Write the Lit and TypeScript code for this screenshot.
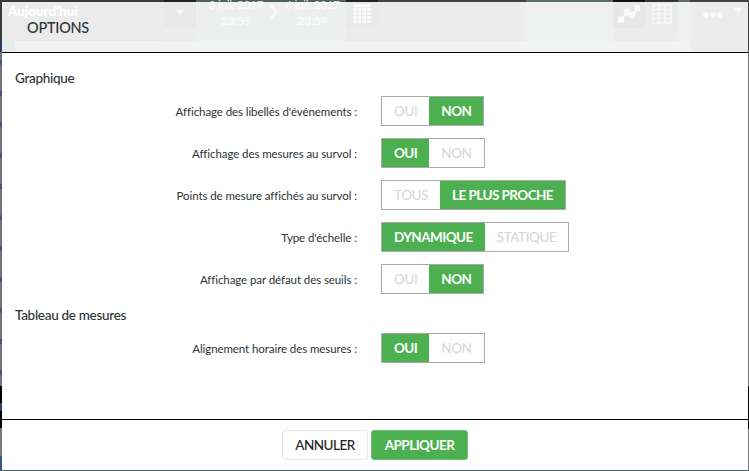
import { LitElement, html, css, svg } from "lit";
import { customElement } from "lit/decorators.js";

type Row = { label: string; options: { text: string; on: boolean }[] };
const opt = (a: string, b: string, first: boolean) => [
  { text: a, on: first },
  { text: b, on: !first },
];
const graph: Row[] = [
  { label: "Affichage des libellés d'événements :", options: opt("OUI", "NON", false) },
  { label: "Affichage des mesures au survol :", options: opt("OUI", "NON", true) },
  { label: "Points de mesure affichés au survol :", options: opt("TOUS", "LE PLUS PROCHE", false) },
  { label: "Type d'échelle :", options: opt("DYNAMIQUE", "STATIQUE", true) },
  { label: "Affichage par défaut des seuils :", options: opt("OUI", "NON", false) },
];
const table: Row[] = [
  { label: "Alignement horaire des mesures :", options: opt("OUI", "NON", true) },
];

@customElement("app-root")
export class AppRoot extends LitElement {
  static styles = css`
    :host {
      display: block;
      width: 749px;
      height: 471px;
      position: relative;
      overflow: hidden;
      font-family: Lato, "Open Sans", sans-serif;
      background:
        repeating-linear-gradient(to bottom, #6f7679 0 8px, #54507e 8px 13px, #6f7679 13px 31px) 0 52px / 2px 334px no-repeat,
        linear-gradient(to bottom, #000 0 17px, #2f3f78 17px 25px, #000 25px 42px, #7a7a7a 42px 70px, #3a5580 70px) 0 386px / 2px 85px no-repeat,
        linear-gradient(to bottom, #70767a 0 386px, #000 386px 429px, #7a7a7a 429px 470px, #4a6066 470px);
    }
    .toolbar {
      height: 41px;
      display: flex;
      align-items: flex-start;
      background: #444;
      color: #fff;
    }
    .toolbar svg { opacity: 0.75; }
    .today {
      width: 164px;
      box-sizing: border-box;
      padding: 2px 0 0 8px;
      font-size: 13.5px;
      font-weight: 700;
      line-height: 18px;
      background: #3a3a3a;
      height: 41px;
    }
    .cell {
      height: 28px;
      flex: none;
      display: flex;
      align-items: center;
      justify-content: center;
      background: #222;
    }
    .caret-cell { width: 32px; padding-bottom: 3px; box-sizing: border-box; }
    .dates {
      flex: none;
      width: 150px;
      height: 41px;
      background: #4f6062;
      display: flex;
      align-items: flex-start;
      color: rgba(255, 255, 255, 0.75);
    }
    .date {
      flex: none;
      width: 74px;
      margin-left: 3px;
      text-align: center;
      line-height: 15px;
      margin-top: -3px;
      font-size: 12px;
      letter-spacing: -0.4px;
    }
    .date.second { width: 67px; margin-left: 0; }
    .date span { display: block; margin-top: 1px; letter-spacing: -0.1px; }
    .chev { flex: none; margin: 5px 0 0 -3px; }
    .cal { width: 32px; }
    .spacer { flex: none; width: 148px; background: #444; height: 41px; }
    .teal { flex: none; width: 87px; background: #5a6b6b; height: 41px; }
    .chart { width: 32px; background: #111; }
    .gridc { width: 32px; margin-left: 1px; background: #333; }
    .tealshort { width: 12px; background: #5a6b6b; height: 41px; flex: none; }
    .more {
      flex: 1;
      height: 41px;
      background: #444;
      display: flex;
      align-items: flex-start;
      gap: 11px;
      padding: 12px 0 0 13px;
    }
    .more .caret { margin-top: -4px; }
    .sub {
      height: 11px;
      background: linear-gradient(to right, #2a4060 0 2px, #2a3a3a 2px 15px, #737d7d 15px);
    }
    .modal {
      position: absolute;
      left: 2px;
      top: 2px;
      width: 746px;
      height: 468px;
      display: flex;
      flex-direction: column;
    }
    .head {
      height: 51px;
      box-sizing: border-box;
      flex: none;
      background: rgba(255, 255, 255, 0.9);
      border-bottom: 1px solid #000;
      padding: 17px 0 0 25px;
      font-size: 14.5px;
      line-height: 18px;
      font-weight: 500;
      color: #2d3436;
      letter-spacing: -0.25px;
    }
    .body {
      flex: 1;
      background: #fff;
      padding: 16px 0 0 13px;
      color: #2d3436;
    }
    h2 {
      margin: 0;
      font-size: 13.5px;
      line-height: 18px;
      font-weight: 500;
      letter-spacing: -0.3px;
    }
    .rows {
      display: flex;
      flex-direction: column;
      gap: 12px;
      padding: 9px 0 0;
    }
    .rows + h2 { margin-top: 12px; }
    .row {
      display: flex;
      align-items: center;
      height: 30px;
    }
    .label {
      width: 342px;
      text-align: right;
      font-size: 11.5px;
      letter-spacing: -0.08px;
      margin-right: 24px;
    }
    .toggle {
      display: flex;
      height: 30px;
      box-sizing: border-box;
      border: 1px solid #aaa;
      font-size: 13.5px;
      line-height: 28px;
    }
    .seg {
      padding: 0 12px;
      color: #d2d6d8;
      background: #fff;
      letter-spacing: -0.4px;
    }
    .seg.on {
      background: #4caf50;
      color: #fff;
      font-weight: 700;
      letter-spacing: -0.55px;
    }
    .foot {
      flex: none;
      height: 51px;
      box-sizing: border-box;
      border-top: 1px solid #000;
      background: #fff;
      display: flex;
      justify-content: center;
      gap: 3px;
      padding: 10px 0 0 0;
    }
    button {
      height: 30px;
      width: 86px;
      box-sizing: border-box;
      border-radius: 3px;
      border: 1px solid #e6e6e6;
      background: #fff;
      color: #222;
      font: 500 13.5px/28px Lato, sans-serif;
      letter-spacing: -0.5px;
      padding: 0;
    }
    button.primary {
      width: 97px;
      background: #4caf50;
      border-color: #6fbf73;
      color: #fff;
      font-weight: 700;
      letter-spacing: -0.55px;
    }
  `;

  private rows(rows: Row[]) {
    return html`<div class="rows">
      ${rows.map(
        (r) => html`<div class="row">
          <div class="label">${r.label}</div>
          <div class="toggle">
            ${r.options.map((o) => html`<div class="seg ${o.on ? "on" : ""}">${o.text}</div>`)}
          </div>
        </div>`
      )}
    </div>`;
  }

  render() {
    return html`
      <div class="toolbar">
        <div class="today">Aujourd'hui</div>
        <div class="cell caret-cell">
          <svg width="8" height="5" viewBox="0 0 10 6"><path d="M0 0h10L5 6z" fill="#fff" /></svg>
        </div>
        <div class="dates">
          <div class="date">3 juil. 2017<span>23:59</span></div>
          <svg class="chev" width="9" height="14" viewBox="0 0 9 14" fill="none" stroke="#fff" stroke-width="2"><path d="M1 1l6 6-6 6" /></svg>
          <div class="date second">4 juil. 2017<span>23:59</span></div>
        </div>
        <div class="cell cal">
          <svg width="18" height="20" viewBox="0 0 18 20" fill="#fff">
            <rect x="0" y="0" width="18" height="3" />
            ${[5, 9, 13, 17].map((y) =>
              [0, 4.7, 9.4, 14.1].map((x) => svg`<rect x=${x} y=${y - 1} width="3.6" height="3" />`)
            )}
          </svg>
        </div>
        <div class="spacer"></div>
        <div class="teal"></div>
        <div class="cell chart">
          <svg width="22" height="18" viewBox="0 0 22 18" fill="none" stroke="#fff" stroke-width="2">
            <path d="M3 15l6-8 5 3 6-7" />
            <circle cx="3" cy="15" r="2.4" fill="#fff" /><circle cx="9" cy="7" r="2.4" fill="#fff" />
            <circle cx="14" cy="10" r="2.4" fill="#fff" /><circle cx="20" cy="3" r="2.4" fill="#fff" />
          </svg>
        </div>
        <div class="cell gridc">
          <svg width="20" height="20" viewBox="0 0 20 20" fill="none" stroke="#fff" stroke-width="1.2">
            <rect x="1" y="1" width="18" height="18" />
            <path d="M1 5.5h18M1 10h18M1 14.5h18M7 1v18M13 1v18" />
          </svg>
        </div>
        <div class="tealshort"></div>
        <div class="more">
          <svg width="20" height="6" viewBox="0 0 20 6" fill="#fff"><circle cx="3" cy="3" r="2.8" /><circle cx="10" cy="3" r="2.8" /><circle cx="17" cy="3" r="2.8" /></svg>
          <svg class="caret" width="8" height="5" viewBox="0 0 10 6"><path d="M0 0h10L5 6z" fill="#fff" /></svg>
        </div>
      </div>
      <div class="sub"></div>
      <div class="modal">
        <div class="head">OPTIONS</div>
        <div class="body">
          <h2>Graphique</h2>
          ${this.rows(graph)}
          <h2>Tableau de mesures</h2>
          ${this.rows(table)}
        </div>
        <div class="foot">
          <button>ANNULER</button>
          <button class="primary">APPLIQUER</button>
        </div>
      </div>
    `;
  }
}
